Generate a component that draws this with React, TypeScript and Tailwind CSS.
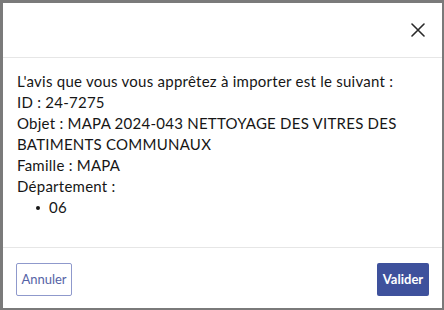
import React from "react";

export default function App() {
  return (
    <div className="w-[444px] h-[310px] bg-[#7a7a7a] pt-[3px] pl-[3px] pr-[2px] pb-[2px]" style={{ fontFamily: "Lato, 'Noto Sans', sans-serif" }}>
      <div className="w-full h-full bg-white flex flex-col">
        <div className="h-[55px] border-b border-[#e6e6e6] flex items-center justify-end pr-[17px] shrink-0">
          <svg width="14" height="14" viewBox="0 0 14 14" className="text-[#2a2a2a]">
            <path d="M1 1 L13 13 M13 1 L1 13" stroke="currentColor" strokeWidth="1.6" strokeLinecap="round" />
          </svg>
        </div>
        <div className="flex-1 pt-[13px] pl-[14px] pr-[14px] text-[15px] leading-[21px] tracking-[0.25px] text-[#161616]">
          <p>L'avis que vous vous apprêtez à importer est le suivant :</p>
          <p>ID : 24-7275</p>
          <p>Objet : MAPA 2024-043 NETTOYAGE DES VITRES DES BATIMENTS COMMUNAUX</p>
          <p>Famille : MAPA</p>
          <p>Département :</p>
          <ul className="pl-[19px]">
            <li className="flex items-center">
              <span className="w-[4px] h-[4px] rounded-full bg-[#161616] mr-[9px] mt-[1px]"></span>
              <span>06</span>
            </li>
          </ul>
        </div>
        <div className="h-[61px] border-t border-[#e6e6e6] flex items-start justify-between px-[13px] pt-[15px] shrink-0">
          <button className="h-[33px] w-[56px] border-[1.5px] border-[#8f99cc] rounded-[2px] text-[13px] text-[#5563a6] bg-white">Annuler</button>
          <button className="h-[33px] w-[52px] bg-[#3e519c] rounded-[2px] text-[13px] font-bold text-white">Valider</button>
        </div>
      </div>
    </div>
  );
}
